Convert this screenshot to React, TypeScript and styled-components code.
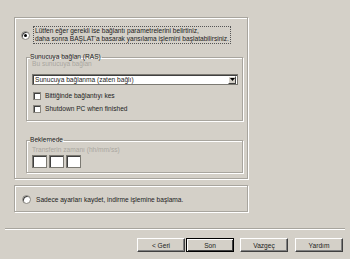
import styled, { createGlobalStyle } from "styled-components";

const GlobalStyle = createGlobalStyle`
  html, body {
    margin: 0;
    padding: 0;
    background: #d4d0c8;
  }
  body {
    width: 350px;
    height: 259px;
    overflow: hidden;
    font-family: "Liberation Sans", Arial, sans-serif;
    font-size: 6.6px;
    color: #222;
  }
`;

export default function App() {
  return (
    <>
      <GlobalStyle />
      <Page>
        <Content>
          <Panel $height={162}>
            <OptionRow>
              <Radio $checked />
              <FocusText>
                Lütfen eğer gerekli ise bağlantı parametrelerini belirtiniz,
                <br />
                daha sonra BAŞLAT'a basarak yansılama işlemini başlatabilirsiniz.
              </FocusText>
            </OptionRow>

            <Group $height={68} $top={9}>
              <Legend>Sunucuya bağlan (RAS)</Legend>
              <Hint $top={0}>Bu sunucuya bağlan</Hint>
              <Combo>
                <ComboText>Sunucuya bağlanma (zaten bağlı)</ComboText>
                <ComboButton>
                  <svg width="5" height="3" viewBox="0 0 5 3">
                    <path d="M0 0h5L2.5 3z" fill="#000" />
                  </svg>
                </ComboButton>
              </Combo>
              <CheckRow $top={7}>
                <Check />
                <span>Bittiğinde bağlantıyı kes</span>
              </CheckRow>
              <CheckRow $top={5}>
                <Check />
                <span>Shutdown PC when finished</span>
              </CheckRow>
            </Group>

            <Group $height={37} $top={15}>
              <Legend>Beklemede</Legend>
              <Hint $top={3}>Transferin zamanı (hh/mm/ss)</Hint>
              <TimeRow>
                <TimeBox />
                <TimeBox />
                <TimeBox />
              </TimeRow>
            </Group>
          </Panel>

          <Panel $height={27} $top={6}>
            <SingleRow>
              <Radio />
              <span>Sadece ayarları kaydet, indirme işlemine başlama.</span>
            </SingleRow>
          </Panel>
        </Content>

        <Separator />

        <Buttons>
          <Button>&lt; Geri</Button>
          <Button $default $gap={1}>Son</Button>
          <Button $gap={6}>Vazgeç</Button>
          <Button $gap={7}>Yardım</Button>
        </Buttons>
      </Page>
    </>
  );
}

const Page = styled.div`
  display: flex;
  flex-direction: column;
  width: 350px;
  height: 259px;
`;

const Content = styled.div`
  display: flex;
  flex-direction: column;
  padding: 17px 0 0 14px;
  width: 234px;
`;

const Panel = styled.div<{ $height: number; $top?: number }>`
  box-sizing: border-box;
  height: ${(p) => p.$height}px;
  margin-top: ${(p) => p.$top ?? 0}px;
  border: 1px solid #a8a59e;
  box-shadow: inset 1px 1px 0 #fff, 1px 1px 0 #fff;
  padding: 8px 4px 0 6px;
  display: flex;
  flex-direction: column;
`;

const OptionRow = styled.div`
  display: flex;
  align-items: center;
  gap: 3px;
`;

const SingleRow = styled.div`
  display: flex;
  align-items: center;
  gap: 5px;
  margin-top: 1px;
  padding-left: 1px;
`;

const Radio = styled.span<{ $checked?: boolean }>`
  width: 7px;
  height: 7px;
  border-radius: 50%;
  background: #fff;
  border: 1px solid #8a8780;
  box-shadow: inset 1px 1px 0 #404040;
  position: relative;
  flex: none;

  &::after {
    content: "";
    display: ${(p) => (p.$checked ? "block" : "none")};
    position: absolute;
    left: 2px;
    top: 2px;
    width: 3px;
    height: 3px;
    border-radius: 50%;
    background: #000;
  }
`;

const FocusText = styled.div`
  border: 1px dotted #555;
  padding: 0 1px;
  line-height: 8px;
  white-space: nowrap;
`;

const Group = styled.fieldset<{ $height: number; $top: number }>`
  box-sizing: border-box;
  margin: ${(p) => p.$top}px 0 0 5px;
  width: 217px;
  height: ${(p) => p.$height}px;
  border: 1px solid #a8a59e;
  box-shadow: inset 1px 1px 0 #fff, 1px 1px 0 #fff;
  padding: 0 4px 0 5px;
  display: flex;
  flex-direction: column;
  min-width: 0;
`;

const Legend = styled.legend`
  padding: 0 1px 0 0;
  margin-left: -2px;
  line-height: 8px;
  font-size: 6.6px;
`;

const Hint = styled.div<{ $top: number }>`
  color: #aaa7a0;
  line-height: 8px;
  margin-top: ${(p) => p.$top - 1}px;
`;

const Combo = styled.div`
  display: flex;
  align-items: center;
  height: 11px;
  margin-top: 6px;
  background: #fff;
  border: 1px solid #7b7972;
  box-shadow: inset 1px 1px 0 #404040;
  box-sizing: border-box;
`;

const ComboText = styled.span`
  flex: 1;
  padding-left: 2px;
  line-height: 9px;
`;

const ComboButton = styled.span`
  width: 8px;
  height: 8px;
  margin-right: 1px;
  background: #d4d0c8;
  border: 1px solid;
  border-color: #fff #404040 #404040 #fff;
  box-sizing: border-box;
  display: flex;
  align-items: center;
  justify-content: center;
`;

const CheckRow = styled.div<{ $top: number }>`
  display: flex;
  align-items: center;
  gap: 4px;
  margin-top: ${(p) => p.$top}px;
  padding-left: 1px;
  line-height: 8px;
`;

const Check = styled.span`
  width: 6px;
  height: 6px;
  background: #fff;
  border: 1px solid #8a8780;
  box-shadow: inset 1px 1px 0 #404040;
  flex: none;
`;

const TimeRow = styled.div`
  display: flex;
  gap: 2px;
  margin-top: 1px;
`;

const TimeBox = styled.span`
  width: 15px;
  height: 13px;
  box-sizing: border-box;
  background: #fff;
  border: 1px solid #7b7972;
  box-shadow: inset 1px 1px 0 #404040;
`;

const Separator = styled.div`
  margin: 16px 5px 0 5px;
  height: 1px;
  background: #a8a59e;
  border-bottom: 1px solid #fff;
`;

const Buttons = styled.div`
  display: flex;
  padding: 8px 7px 0 0;
  justify-content: flex-end;
`;

const Button = styled.button<{ $default?: boolean; $gap?: number }>`
  width: 48px;
  height: 14px;
  margin-left: ${(p) => p.$gap ?? 0}px;
  padding: 0;
  font-family: "Liberation Sans", Arial, sans-serif;
  font-size: 6.6px;
  color: #222;
  background: #d4d0c8;
  border: 1px solid;
  border-color: ${(p) => (p.$default ? "#000" : "#fff #404040 #404040 #fff")};
  box-shadow: ${(p) =>
    p.$default ? "inset 1px 1px 0 #fff, inset -1px -1px 0 #404040" : "inset -1px -1px 0 #808080"};
`;
